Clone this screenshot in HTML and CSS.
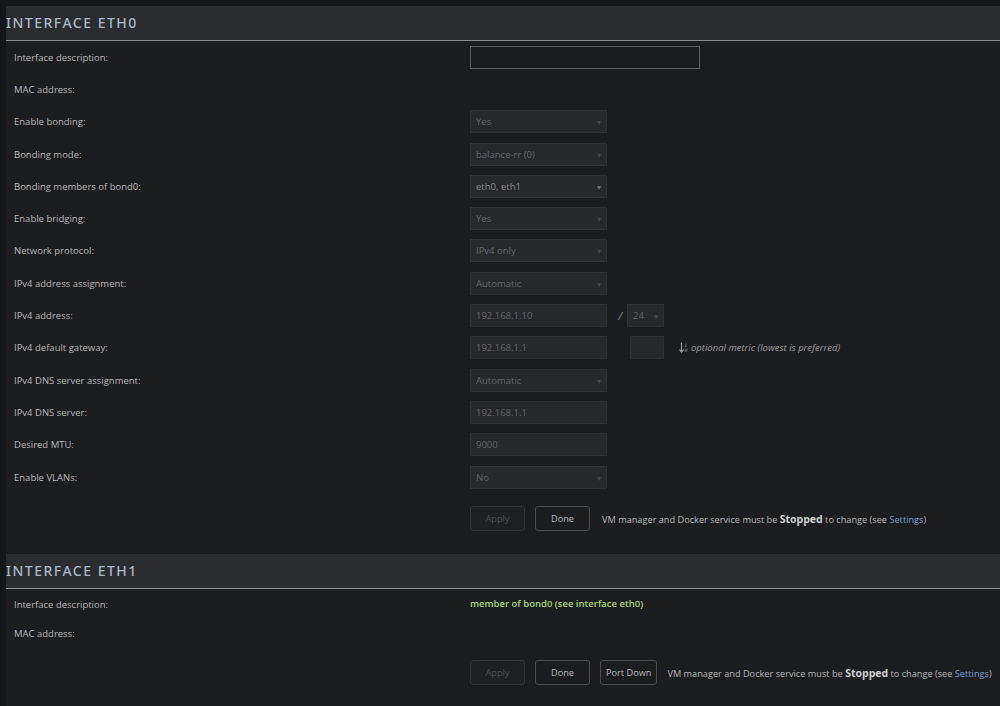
FILE: index.html
```html
<!DOCTYPE html>
<html lang="en">
<head>
  <meta charset="UTF-8">
  <title>Network Settings</title>
  <link rel="stylesheet" href="styles.css">
</head>
<body>
  <main class="page">
    <section class="iface">
      <h2 class="bar">Interface eth0</h2>
      <div class="row"><span class="label">Interface description:</span><span class="field"><input class="text wide" type="text"></span></div>
      <div class="row"><span class="label">MAC address:</span><span class="field"></span></div>
      <div class="row"><span class="label">Enable bonding:</span><span class="field"><span class="select">Yes</span></span></div>
      <div class="row"><span class="label">Bonding mode:</span><span class="field"><span class="select">balance-rr (0)</span></span></div>
      <div class="row"><span class="label">Bonding members of bond0:</span><span class="field"><span class="select on">eth0, eth1</span></span></div>
      <div class="row"><span class="label">Enable bridging:</span><span class="field"><span class="select">Yes</span></span></div>
      <div class="row"><span class="label">Network protocol:</span><span class="field"><span class="select">IPv4 only</span></span></div>
      <div class="row"><span class="label">IPv4 address assignment:</span><span class="field"><span class="select">Automatic</span></span></div>
      <div class="row"><span class="label">IPv4 address:</span><span class="field"><span class="box">192.168.1.10</span><span class="slash">/</span><span class="select small">24</span></span></div>
      <div class="row"><span class="label">IPv4 default gateway:</span><span class="field"><span class="box">192.168.1.1</span><span class="box metric"></span><span class="hint"><svg class="sort" width="10" height="11" viewBox="0 0 10 11"><path d="M2.5 0.5v9M0.5 7.5l2 2.5 2-2.5" stroke="#9a9c9f" stroke-width="1.2" fill="none"/><text x="5.4" y="4.6" font-size="4.6" fill="#9a9c9f" font-family="DejaVu Sans">1</text><text x="5.4" y="10.4" font-size="4.6" fill="#9a9c9f" font-family="DejaVu Sans">9</text></svg>optional metric (lowest is preferred)</span></span></div>
      <div class="row"><span class="label">IPv4 DNS server assignment:</span><span class="field"><span class="select">Automatic</span></span></div>
      <div class="row"><span class="label">IPv4 DNS server:</span><span class="field"><span class="box">192.168.1.1</span></span></div>
      <div class="row"><span class="label">Desired MTU:</span><span class="field"><span class="box">9000</span></span></div>
      <div class="row"><span class="label">Enable VLANs:</span><span class="field"><span class="select">No</span></span></div>
      <div class="actions">
        <button class="btn" disabled>Apply</button>
        <button class="btn">Done</button>
        <span class="note">VM manager and Docker service must be <b>Stopped</b> to change (see <a href="#">Settings</a>)</span>
      </div>
    </section>
    <section class="iface second">
      <h2 class="bar">Interface eth1</h2>
      <div class="row first"><span class="label">Interface description:</span><span class="field"><span class="member">member of bond0 (see interface eth0)</span></span></div>
      <div class="row short"><span class="label">MAC address:</span><span class="field"></span></div>
      <div class="actions">
        <button class="btn" disabled>Apply</button>
        <button class="btn">Done</button>
        <button class="btn">Port Down</button>
        <span class="note">VM manager and Docker service must be <b>Stopped</b> to change (see <a href="#">Settings</a>)</span>
      </div>
    </section>
  </main>
</body>
</html>
```

FILE: styles.css
```css
:root {
  --page-bg: #151617;
  --panel-bg: #1c1d1f;
  --bar-bg: #2a2c30;
  --field-bg: #26282b;
  --field-border: #2f3135;
  --label: #b4b5b7;
  --dim: #64666a;
  --title: #a9b7c6;
}
* {
  box-sizing: border-box;
  margin: 0;
  padding: 0;
}
body {
  background: var(--page-bg);
  font-family: 'Open Sans', 'Noto Sans', sans-serif;
  font-size: 9.5px;
  color: var(--label);
  height: 706px;
  overflow: hidden;
}
.page {
  padding: 6px 0 0 6px;
}
.iface {
  background: var(--panel-bg);
  padding-bottom: 23px;
}
.second {
  padding-bottom: 40px;
}
.bar {
  background: var(--bar-bg);
  height: 35px;
  border-bottom: 1px solid #8d8e90;
  color: var(--title);
  font-family: 'Noto Sans', sans-serif;
  font-size: 14px;
  font-weight: 500;
  letter-spacing: 1.5px;
  text-transform: uppercase;
  line-height: 34px;
}
.row {
  display: flex;
  align-items: center;
  height: 32.3px;
  padding-left: 8px;
}
.second .first {
  height: 30px;
}
.second .short {
  height: 28px;
}
.label {
  width: 456px;
  flex: none;
}
.field {
  display: flex;
  align-items: center;
}
.text {
  background: var(--panel-bg);
  border: 1px solid #5e5f5b;
  height: 23px;
  outline: none;
}
.wide {
  width: 230px;
}
.select, .box {
  position: relative;
  display: block;
  width: 137px;
  height: 23px;
  line-height: 21px;
  padding-left: 5px;
  background: var(--field-bg);
  border: 1px solid var(--field-border);
  color: var(--dim);
  font-size: 9.5px;
}
.select::after {
  content: "▾";
  position: absolute;
  right: 5px;
  top: 0;
  font-size: 8px;
  color: #45474b;
}
.select.on {
  color: #85878a;
}
.select.on::after {
  color: #6e7073;
}
.select.small {
  width: 37px;
}
.slash {
  width: 20px;
  text-align: right;
  padding-right: 5px;
  color: #8c8e91;
  font-size: 11px;
  font-style: italic;
}
.metric {
  width: 34px;
  margin-left: 23px;
}
.hint {
  display: flex;
  align-items: center;
  margin-left: 15px;
  font-style: italic;
  color: #9a9c9f;
  font-size: 9.5px;
}
.sort {
  margin-right: 2px;
}
.member {
  color: #a8d57a;
  font-weight: 600;
  margin-top: -2px;
}
.actions {
  display: flex;
  align-items: center;
  padding-left: 464px;
  margin-top: 13px;
}
.second .actions {
  margin-top: 13px;
}
.btn {
  height: 25px;
  min-width: 55px;
  padding: 0 5px;
  margin-right: 10px;
  background: var(--panel-bg);
  border: 1px solid #4a4c50;
  border-radius: 3px;
  color: #b4b5b7;
  font-family: 'Open Sans', 'Noto Sans', sans-serif;
  font-size: 9.2px;
  white-space: nowrap;
}
.btn:disabled {
  border-color: #323438;
  color: #4d4f52;
  background: #1f2022;
}
.note {
  margin-left: 2px;
  font-size: 9.2px;
  white-space: nowrap;
}
.second .note {
  margin-left: 0;
}
.note b {
  font-size: 10.5px;
  color: #d0d1d2;
}
.note a {
  color: #6f9bd0;
  text-decoration: none;
}
```
